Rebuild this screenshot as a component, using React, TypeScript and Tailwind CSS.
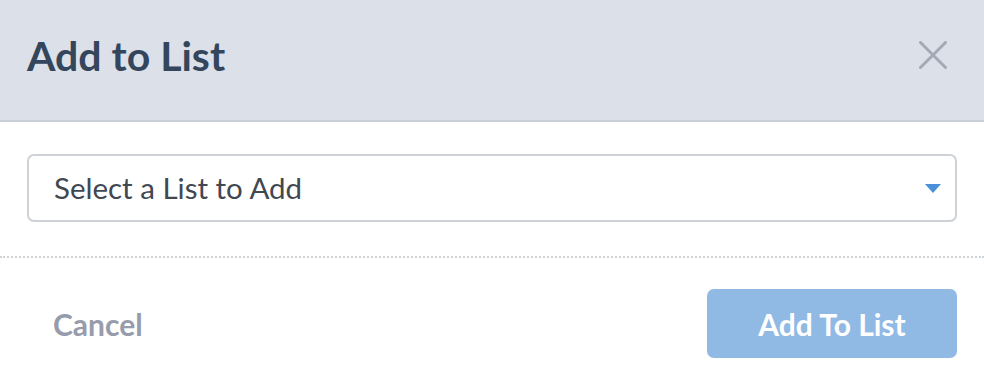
export default function App() {
  return (
    <div className="w-[984px] h-[386px] bg-white font-['Lato','Liberation_Sans',sans-serif]">
      <div className="h-[122px] bg-[#dce0e8] border-b-2 border-[#cbd0d8] flex items-center justify-between pl-[27px] pr-[37px] pb-[10px]">
        <h2 className="text-[41px] leading-none font-bold text-[#34465c]">Add to List</h2>
        <button className="text-[#a3a9b5]">
          <svg width="28" height="28" viewBox="0 0 28 28" stroke="currentColor" strokeWidth="3" strokeLinecap="round">
            <path d="M1.5 1.5 L26.5 26.5 M26.5 1.5 L1.5 26.5" />
          </svg>
        </button>
      </div>

      <div className="px-[27px] pt-[32px] pb-[34px]">
        <div className="h-[68px] border-2 border-[#ced2d7] rounded-[7px] flex items-center justify-between pl-[25px] pr-[14px]">
          <span className="text-[29.5px] leading-none text-[#414852]">Select a List to Add</span>
          <svg width="16" height="9" viewBox="0 0 16 9">
            <path d="M0 0 L16 0 L8 9 Z" fill="#4a90d9" />
          </svg>
        </div>
      </div>

      <div className="border-t-2 border-dotted border-[#cfd3d8]" />

      <div className="flex items-center justify-between pl-[53px] pr-[27px] pt-[31px]">
        <button className="text-[30px] leading-none font-bold text-[#969cab]">Cancel</button>
        <button className="w-[250px] h-[69px] rounded-[7px] bg-[#90bae4] text-white text-[30px] leading-none font-bold">
          Add To List
        </button>
      </div>
    </div>
  );
}
